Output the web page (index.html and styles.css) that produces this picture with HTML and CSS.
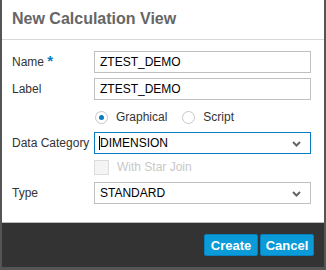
FILE: index.html
```html
<!DOCTYPE html>
<html lang="en">
<head>
    <meta charset="UTF-8">
    <title>New Calculation View</title>
    <link rel="stylesheet" href="styles.css">
</head>
<body>
    <div class="dialog">
        <div class="header">
            <h1>New Calculation View</h1>
        </div>

        <div class="content">
            <div class="row">
                <label for="name">Name <span class="required">*</span></label>
                <input type="text" id="name" class="field" value="ZTEST_DEMO">
            </div>
            <div class="row">
                <label for="label">Label</label>
                <input type="text" id="label" class="field" value="ZTEST_DEMO">
            </div>
            <div class="row radio-row">
                <span></span>
                <div class="radios">
                    <span class="radio checked"></span><span class="radio-text">Graphical</span>
                    <span class="radio"></span><span class="radio-text">Script</span>
                </div>
            </div>
            <div class="row">
                <label>Data Category</label>
                <div class="field select focused"><span class="caret"></span>DIMENSION<svg class="chevron" width="9" height="6" viewBox="0 0 9 6"><path d="M1 1 L4.5 4.5 L8 1" fill="none" stroke="#666" stroke-width="2"/></svg></div>
            </div>
            <div class="row check-row">
                <span></span>
                <div class="check"><span class="box"></span>With Star Join</div>
            </div>
            <div class="row">
                <label>Type</label>
                <div class="field select">STANDARD<svg class="chevron" width="9" height="6" viewBox="0 0 9 6"><path d="M1 1 L4.5 4.5 L8 1" fill="none" stroke="#666" stroke-width="2"/></svg></div>
            </div>
        </div>

        <div class="footer">
            <button class="btn">Create</button>
            <button class="btn">Cancel</button>
        </div>
    </div>
</body>
</html>
```

FILE: styles.css
```css
html, body {
    margin: 0;
    padding: 0;
}
body {
    font-family: "Liberation Sans", Arial, sans-serif;
    font-size: 12px;
    color: #333;
    background-color: #555;
}
.dialog {
    width: 322px;
    height: 267px;
    margin-left: 2px;
    background-color: white;
    display: flex;
    flex-direction: column;
}
.header {
    height: 39px;
    border-bottom: 1px solid #d8d8d8;
    padding-left: 10px;
    display: flex;
    align-items: center;
}
h1 {
    margin: 0;
    font-size: 16px;
    font-weight: bold;
    color: #666;
    position: relative;
    top: -1px;
}
.content {
    flex: 1;
    padding: 11px 13px 0 10px;
}
.row {
    display: grid;
    grid-template-columns: 82px 1fr;
    align-items: center;
    height: 22px;
    margin-bottom: 5px;
    white-space: nowrap;
}
.row label {
    color: #333;
}
.required {
    color: #0a7cc0;
    font-weight: bold;
    font-size: 15px;
    line-height: 10px;
}
.field {
    box-sizing: border-box;
    height: 22px;
    width: 100%;
    margin: 0;
    padding: 0 0 0 5px;
    border: 1px solid #bfbfbf;
    font-family: inherit;
    font-size: 12px;
    color: #000;
    background: white;
    outline: none;
}
.select {
    display: flex;
    align-items: center;
    position: relative;
}
.select.focused {
    border-color: #0a7cc0;
    padding-left: 4px;
}
.caret {
    width: 1px;
    height: 14px;
    background: #000;
    margin-right: 0;
}
.chevron {
    position: absolute;
    right: 9px;
    top: 8px;
}
.radio-row {
    height: 18px;
    margin: 8px 0 6px 0;
}
.radios {
    display: flex;
    align-items: center;
    color: #333;
}
.radio {
    box-sizing: border-box;
    width: 13px;
    height: 13px;
    border: 1px solid #c8c8c8;
    border-radius: 50%;
    margin-left: 1px;
    margin-right: 8px;
    display: flex;
    align-items: center;
    justify-content: center;
}
.radio.checked::after {
    content: "";
    width: 5px;
    height: 5px;
    border-radius: 50%;
    background: #0a7cc0;
}
.radio-text {
    margin-right: 14px;
}
.check-row {
    height: 16px;
    margin: 4px 0 7px 0;
}
.check {
    display: flex;
    align-items: center;
    color: #c8c8c8;
}
.box {
    box-sizing: border-box;
    width: 15px;
    height: 15px;
    border: 1px solid #dcdcdc;
    background: #f4f4f4;
    margin-right: 8px;
}
.footer {
    height: 44px;
    background-color: #333;
    border-top: 1px solid #bbb;
    display: flex;
    justify-content: flex-end;
    align-items: center;
    gap: 2px;
    padding-right: 10px;
}
.btn {
    height: 22px;
    width: 54px;
    padding: 0;
    border: 1px solid #0580c0;
    background-color: #0a9bd8;
    color: white;
    font-family: inherit;
    font-size: 13px;
    font-weight: bold;
    border-radius: 2px;
}
```
